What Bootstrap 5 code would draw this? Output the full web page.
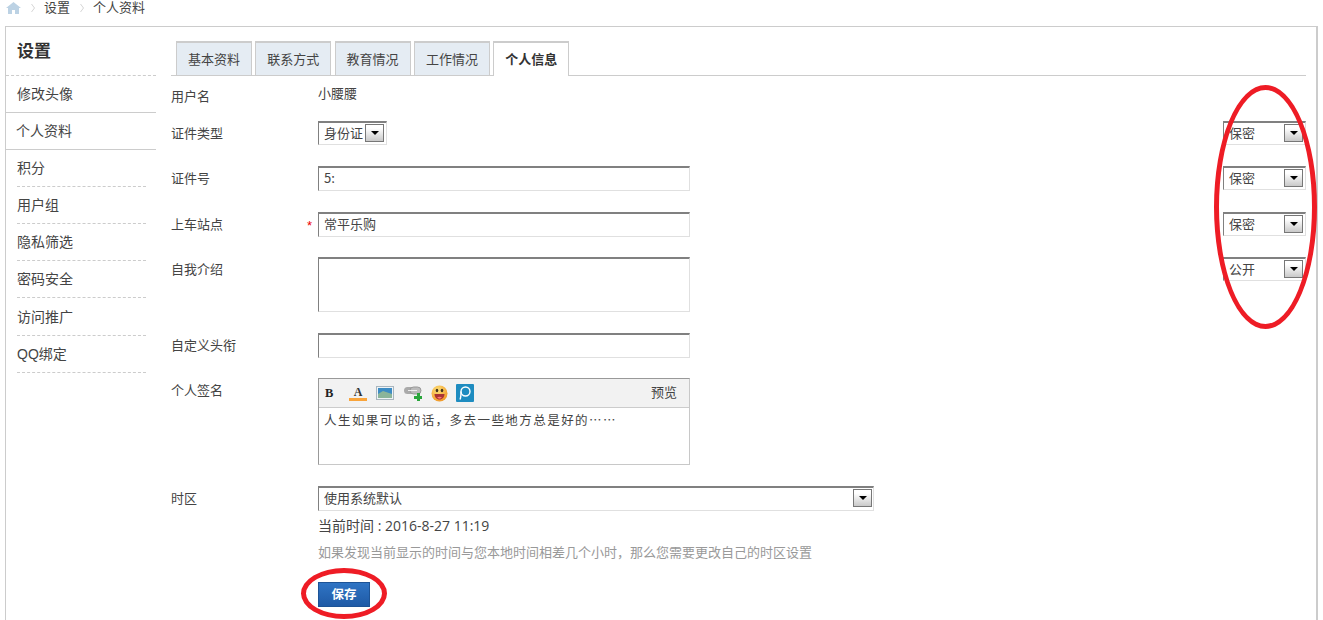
<!DOCTYPE html>
<html lang="zh-CN">
<head>
<meta charset="utf-8">
<title>个人资料</title>
<link href="https://cdn.jsdelivr.net/npm/bootstrap@5.3.0/dist/css/bootstrap.min.css" rel="stylesheet">
<style>
html,body{height:620px;overflow:hidden;background:#fff}
body{font:13px/20px "Liberation Sans","Noto Sans CJK SC",sans-serif;color:#444}
.crumbs{height:26px;padding-left:6px;font-size:13px;line-height:15px;color:#444}
.crumbs .homeic{margin-top:2px;flex:none}
.crumbs .sep{width:4px;height:8px;margin:4px 9px 0 10px;flex:none}
.panel{margin:0 5px 0 5px;height:620px;border:1px solid #ccc;border-width:1px 2px 0 1px;position:relative}
.side{width:150px;flex:none}
.side h2{font-size:17px;font-weight:700;line-height:22px;margin:0;padding:14px 11px 12px;color:#333;border-bottom:1px dashed #ccc;height:49px}
.side ul{list-style:none;margin:0;padding:0}
.side li{height:37px;line-height:37px;font-size:14px;padding-left:11px}
.side li span{display:block;width:129px;height:37px;border-bottom:1px dashed #ccc}
.side li.active{border-top:1px solid #ccc;border-bottom:1px solid #ccc;margin-top:-1px;height:38px;padding-left:10px}
.side li.active span{border:0;height:auto}
.side li.pre span{border-bottom:0}
.side li.tall,.side li.tall span{height:38px;line-height:38px}
.main{flex:1;padding:14px 10px 0 15px;min-width:0}
.tabbar{height:35px;border-bottom:1px solid #ccc;padding-left:5px;gap:3.3px}
.tabbar div{width:76px;height:34px;line-height:34px;text-align:center;background:#e5ecf3;border:1px solid #ccc;border-bottom:0;border-top-width:2px;color:#444}
.tabbar div.on{background:#fff;height:35px;font-weight:700;color:#333}
.fld{display:flex}
.lbl{width:147px;flex:none;line-height:24px;padding-top:1px;display:flex;justify-content:space-between;padding-right:6px}
.lbl b{color:#e00;font-weight:400;line-height:26px}
.uname{line-height:18px;padding-top:1px}
.h45{height:45px}.h46{height:46px}.h76{height:76px}.h108{height:108px}
.txt{border:1px solid #e0e0e0;border-top:2px solid #808080;border-left:1px solid #808080;border-radius:0;width:372px;height:25px;padding:0 5px 3px;font:13px "Noto Sans CJK SC",sans-serif;color:#444;background:#fff;outline:0;display:block}
textarea.txt{height:55px;resize:none}
.pick{position:relative;display:block;height:24px;flex:none}
.pick select{appearance:none;-webkit-appearance:none;width:100%;height:100%;border:1px solid #e0e0e0;border-top:2px solid #808080;border-left:1px solid #808080;border-radius:0;background:#fff;padding:0 6px 2px 5px;font:13px "Noto Sans CJK SC",sans-serif;color:#444;outline:0}
.w83 select{padding-left:5px}
.arrow{position:absolute;top:3px;right:3px;width:19px;height:18px;border:1px solid #777;background:linear-gradient(#fff 20%,#c9c9c9);display:flex;align-items:center;justify-content:center;pointer-events:none}
.arrow i{display:block;border:4px solid transparent;border-top:4px solid #000;border-bottom:0}
.w83{width:83px}.w69{width:69px}
.pick.w555{width:556px;height:25px}
.pick.w555 select{padding-bottom:4px}
.pick.w555 .arrow{right:2px}
.editor{width:372px;height:87px;border:1px solid #c8c8c8;border-top-color:#999;border-left-color:#999}
.bar{height:29px;background:#f2f2f2;border-bottom:1px solid #ccc;padding:0 12px 0 6px}
.bar svg{display:block;flex:none}
.bar .boldb{font:700 12.5px/1 "Liberation Serif",serif;color:#222;width:24px}
.bar .gap8{margin-right:9px}
.bar .gap10{margin-right:10px}
.bar .gap9{margin-right:9px}
.sig{display:block;width:100%;height:56px;border:0;padding:3px 5px;font:12.5px/18px "Noto Sans CJK SC",sans-serif;letter-spacing:1.45px;color:#444;resize:none;outline:0}
.now{margin-left:147px;font:14px/20px "Open Sans","Noto Sans CJK SC",sans-serif;color:#444;height:26px;margin-top:5px}
.tip{margin-left:147px;color:#999;font-size:13px;height:30px;line-height:22px}
.save{margin-left:147px;margin-top:10px;width:52px;height:25px;padding:0;border:1px solid #1d5396;border-radius:0;background:linear-gradient(#2f74c4,#1f5aa6);color:#fff;font:700 12.5px/1 "Noto Sans CJK SC",sans-serif;display:block}
.ring{position:absolute;border:5px solid #ee1c25;border-radius:50%;pointer-events:none}
.r1{left:1208px;top:58px;width:103px;height:244px}
.r2{left:295px;top:541px;width:86px;height:51px}
</style>
</head>
<body>
<div class="crumbs d-flex align-items-start">
  <svg width="15" height="12" viewBox="0 0 15 12" class="homeic"><path d="M7.5 0 0 6h2v6h4V8h3v4h4V6h2z" fill="#bcd2e4"/></svg>
  <svg class="sep" viewBox="0 0 4 8"><path d="M.5 0 3.5 4 .5 8" fill="none" stroke="#d5d5d5"/></svg>
  <span>设置</span>
  <svg class="sep" viewBox="0 0 4 8"><path d="M.5 0 3.5 4 .5 8" fill="none" stroke="#d5d5d5"/></svg>
  <span>个人资料</span>
</div>
<div class="panel d-flex">
  <div class="side">
    <h2>设置</h2>
    <ul>
      <li class="pre"><span>修改头像</span></li>
      <li class="active"><span>个人资料</span></li>
      <li><span>积分</span></li>
      <li><span>用户组</span></li>
      <li><span>隐私筛选</span></li>
      <li><span>密码安全</span></li>
      <li class="tall"><span>访问推广</span></li>
      <li><span>QQ绑定</span></li>
    </ul>
  </div>
  <div class="main">
    <div class="tabbar d-flex">
      <div>基本资料</div><div>联系方式</div><div>教育情况</div><div>工作情况</div><div class="on">个人信息</div>
    </div>
    <div class="fld h45 pt-2"><div class="lbl">用户名</div><div class="uname">小腰腰</div></div>
    <div class="fld h45">
      <div class="lbl">证件类型</div>
      <div class="pick w69"><select><option>身份证</option></select><span class="arrow"><i></i></span></div>
      <div class="pick w83 ms-auto"><select><option>保密</option></select><span class="arrow"><i></i></span></div>
    </div>
    <div class="fld h46">
      <div class="lbl">证件号</div>
      <input class="txt" value="5:">
      <div class="pick w83 ms-auto"><select><option>保密</option></select><span class="arrow"><i></i></span></div>
    </div>
    <div class="fld h45">
      <div class="lbl">上车站点<b>*</b></div>
      <input class="txt" value="常平乐购">
      <div class="pick w83 ms-auto"><select><option>保密</option></select><span class="arrow"><i></i></span></div>
    </div>
    <div class="fld h76">
      <div class="lbl">自我介绍</div>
      <textarea class="txt"></textarea>
      <div class="pick w83 ms-auto"><select><option>公开</option></select><span class="arrow"><i></i></span></div>
    </div>
    <div class="fld h45">
      <div class="lbl">自定义头衔</div>
      <input class="txt">
    </div>
    <div class="fld h108">
      <div class="lbl">个人签名</div>
      <div class="editor">
        <div class="bar d-flex align-items-center">
          <span class="boldb">B</span>
          <svg width="18" height="17" viewBox="0 0 18 17" class="gap8"><text x="9" y="11" text-anchor="middle" font-family="Liberation Serif" font-weight="700" font-size="12" fill="#333">A</text><rect x="0" y="13" width="18" height="3" fill="#f9a43a"/></svg>
          <svg width="18" height="14" viewBox="0 0 18 14" class="gap10"><rect x=".5" y=".5" width="17" height="13" fill="#eef3f6" stroke="#a9b6bf"/><rect x="2" y="2" width="14" height="10" fill="#3d8cc4"/><path d="M2 8l5-3 9 3v4H2z" fill="#8bb59a"/></svg>
          <svg width="18" height="16" viewBox="0 0 18 16" class="gap9"><rect x="0" y="2" width="11" height="7" rx="3.500" fill="#aaa"/><rect x="6" y="2" width="11" height="7" rx="3.500" fill="#bbb" stroke="#999"/><path d="M4 5.500h9" stroke="#eee"/><path d="M10 11h3V8h3v3h2v3h-2v2h-3v-2h-3z" fill="#2aa63c"/></svg>
          <svg width="17" height="17" viewBox="0 0 17 17" class="me-2"><defs><radialGradient id="sm" cx=".4" cy=".3" r=".8"><stop offset="0" stop-color="#fde27a"/><stop offset="1" stop-color="#ef8f1c"/></radialGradient></defs><circle cx="8.500" cy="8.500" r="8" fill="url(#sm)"/><ellipse cx="6" cy="5.500" rx="1.300" ry="1.800" fill="#432"/><ellipse cx="11" cy="5.500" rx="1.300" ry="1.800" fill="#432"/><path d="M3.500 9h10c0 3-2 5.500-5 5.500S3.500 12 3.500 9z" fill="#a33"/><path d="M6 12.500c1.500-1 3.500-1 5 0-1.500 1.500-3.500 1.500-5 0z" fill="#f77"/></svg>
          <svg width="18" height="18" viewBox="0 0 18 18"><rect width="18" height="18" rx="1" fill="#1e8cc0"/><circle cx="9.500" cy="7.500" r="4.500" fill="none" stroke="#fff" stroke-width="1.400"/><path d="M5 7.500c0 4 0 6-1 8" fill="none" stroke="#fff" stroke-width="1.400"/></svg>
          <span class="ms-auto">预览</span>
        </div>
        <textarea class="sig">人生如果可以的话，多去一些地方总是好的……</textarea>
      </div>
    </div>
    <div class="fld">
      <div class="lbl">时区</div>
      <div class="pick w555"><select><option>使用系统默认</option></select><span class="arrow"><i></i></span></div>
    </div>
    <div class="now">当前时间 : 2016-8-27 11:19</div>
    <div class="tip">如果发现当前显示的时间与您本地时间相差几个小时，那么您需要更改自己的时区设置</div>
    <button class="save" type="button">保存</button>
  </div>
  <div class="ring r1"></div>
  <div class="ring r2"></div>
</div>
</body>
</html>
